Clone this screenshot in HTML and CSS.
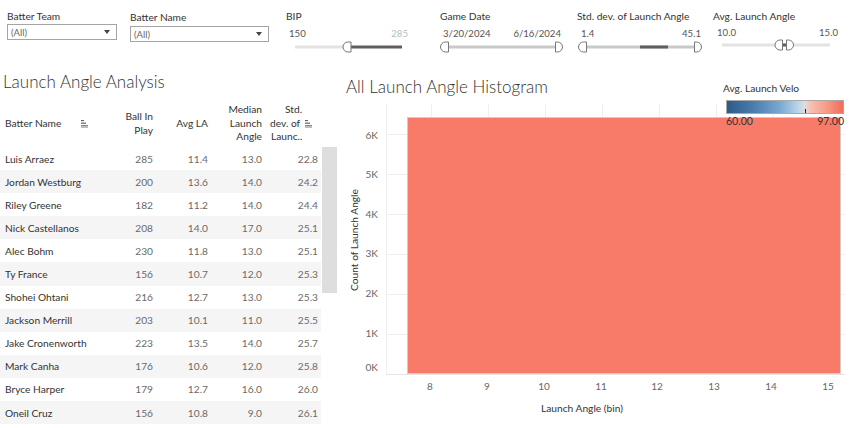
FILE: index.html
```html
<!DOCTYPE html>
<html>
<head>
<meta charset="utf-8">
<title>Launch Angle Analysis</title>
<link rel="stylesheet" href="styles.css">
</head>
<body>
<div class="page">
  <header class="filters">
    <div class="filter f-team">
      <div class="flabel">Batter Team</div>
      <div class="select"><span>(All)</span><span class="caret"></span></div>
    </div>
    <div class="filter f-name">
      <div class="flabel">Batter Name</div>
      <div class="select"><span>(All)</span><span class="caret"></span></div>
    </div>
    <div class="filter f-bip">
      <div class="flabel">BIP</div>
      <div class="vals"><span>150</span><span class="dim">285</span></div>
      <svg class="slider" width="124" height="12" viewBox="0 0 124 12">
        <rect x="9" y="4.5" width="52" height="3" fill="#e3e3e3"/>
        <rect x="64" y="4.5" width="52" height="3" fill="#5f5f5f"/>
        <path d="M65,1 H62 A5,5 0 0 0 62,11 H65 Z" fill="#fff" stroke="#777"/>
      </svg>
    </div>
    <div class="filter f-date">
      <div class="flabel">Game Date</div>
      <div class="vals"><span>3/20/2024</span><span>6/16/2024</span></div>
      <svg class="slider" width="130" height="12" viewBox="0 0 130 12">
        <rect x="6" y="4.5" width="112" height="3" fill="#c9c9c9"/>
        <path d="M8.5,1 H5.5 A5,5 0 0 0 5.5,11 H8.5 Z" fill="#fff" stroke="#777"/>
        <path d="M115.5,1 H117.5 A5,5 0 0 1 117.5,11 H115.5 Z" fill="#fff" stroke="#777"/>
      </svg>
    </div>
    <div class="filter f-std">
      <div class="flabel">Std. dev. of Launch Angle</div>
      <div class="vals"><span>1.4</span><span>45.1</span></div>
      <svg class="slider" width="130" height="12" viewBox="0 0 130 12">
        <rect x="8" y="4.5" width="111" height="3" fill="#c9c9c9"/>
        <rect x="63" y="4.5" width="28" height="3" fill="#5f5f5f"/>
        <path d="M9.5,1 H6.5 A5,5 0 0 0 6.5,11 H9.5 Z" fill="#fff" stroke="#777"/>
        <path d="M117.5,1 H119.5 A5,5 0 0 1 119.5,11 H117.5 Z" fill="#fff" stroke="#777"/>
      </svg>
    </div>
    <div class="filter f-avg">
      <div class="flabel">Avg. Launch Angle</div>
      <div class="vals"><span>10.0</span><span>15.0</span></div>
      <svg class="slider slider-avg" width="130" height="12" viewBox="0 0 130 12">
        <rect x="9" y="4.5" width="108" height="3" fill="#e3e3e3"/>
        <rect x="69" y="4.5" width="4" height="3" fill="#5f5f5f"/>
        <path d="M69.5,1 H67 A5,5 0 0 0 67,11 H69.5 Z" fill="#fff" stroke="#777"/>
        <path d="M73.5,1 H75.5 A5,5 0 0 1 75.5,11 H73.5 Z" fill="#fff" stroke="#777"/>
      </svg>
    </div>
  </header>

  <main class="main">
    <section class="left">
      <h1 class="title">Launch Angle Analysis</h1>
      <div class="table">
        <div class="thead">
          <div class="th th-name"><span>Batter Name</span>
            <svg class="sort" width="7" height="8" viewBox="0 0 7 8"><rect x="0" y="0" width="3" height="1.2" fill="#666"/><rect x="0" y="2.6" width="5" height="1.2" fill="#666"/><rect x="0" y="5.2" width="7" height="1.2" fill="#666"/><rect x="0" y="7" width="7" height="1" fill="#bbb"/></svg>
          </div>
          <div class="th num">Ball In<br>Play</div>
          <div class="th num">Avg LA</div>
          <div class="th num">Median<br>Launch<br>Angle</div>
          <div class="th th-std">
            <div class="l1">Std.</div>
            <div class="l2"><span>dev. of</span>
              <svg class="sort" width="7" height="8" viewBox="0 0 7 8"><rect x="0" y="0" width="3" height="1.2" fill="#666"/><rect x="0" y="2.6" width="5" height="1.2" fill="#666"/><rect x="0" y="5.2" width="7" height="1.2" fill="#666"/><rect x="0" y="7" width="7" height="1" fill="#bbb"/></svg>
            </div>
            <div class="l3">Launc..</div>
          </div>
        </div>
        <div class="tbody-wrap">
          <div class="tbody">
            <div class="row"><div class="name">Luis Arraez</div><div class="num">285</div><div class="num">11.4</div><div class="num">13.0</div><div class="num">22.8</div></div>
            <div class="row"><div class="name">Jordan Westburg</div><div class="num">200</div><div class="num">13.6</div><div class="num">14.0</div><div class="num">24.2</div></div>
            <div class="row"><div class="name">Riley Greene</div><div class="num">182</div><div class="num">11.2</div><div class="num">14.0</div><div class="num">24.4</div></div>
            <div class="row"><div class="name">Nick Castellanos</div><div class="num">208</div><div class="num">14.0</div><div class="num">17.0</div><div class="num">25.1</div></div>
            <div class="row"><div class="name">Alec Bohm</div><div class="num">230</div><div class="num">11.8</div><div class="num">13.0</div><div class="num">25.1</div></div>
            <div class="row"><div class="name">Ty France</div><div class="num">156</div><div class="num">10.7</div><div class="num">12.0</div><div class="num">25.3</div></div>
            <div class="row"><div class="name">Shohei Ohtani</div><div class="num">216</div><div class="num">12.7</div><div class="num">13.0</div><div class="num">25.3</div></div>
            <div class="row"><div class="name">Jackson Merrill</div><div class="num">203</div><div class="num">10.1</div><div class="num">11.0</div><div class="num">25.5</div></div>
            <div class="row"><div class="name">Jake Cronenworth</div><div class="num">223</div><div class="num">13.5</div><div class="num">14.0</div><div class="num">25.7</div></div>
            <div class="row"><div class="name">Mark Canha</div><div class="num">176</div><div class="num">10.6</div><div class="num">12.0</div><div class="num">25.8</div></div>
            <div class="row"><div class="name">Bryce Harper</div><div class="num">179</div><div class="num">12.7</div><div class="num">16.0</div><div class="num">26.0</div></div>
            <div class="row"><div class="name">Oneil Cruz</div><div class="num">156</div><div class="num">10.8</div><div class="num">9.0</div><div class="num">26.1</div></div>
          </div>
          <div class="scroll"><div class="thumb"></div></div>
        </div>
      </div>
    </section>

    <section class="right">
      <h2 class="htitle">All Launch Angle Histogram</h2>
      <div class="legend">
        <div class="ltitle">Avg. Launch Velo</div>
        <div class="lbar"></div>
        <div class="llabels"><span>60.00</span><span>97.00</span></div>
      </div>
      <svg class="chart" width="515" height="330" viewBox="340 98 515 330">
        <g stroke="#efefef" stroke-width="1">
          <line x1="386.5" y1="104" x2="386.5" y2="374"/>
          <line x1="431.5" y1="104" x2="431.5" y2="374"/>
          <line x1="488.5" y1="104" x2="488.5" y2="374"/>
          <line x1="545.5" y1="104" x2="545.5" y2="374"/>
          <line x1="602.5" y1="104" x2="602.5" y2="374"/>
          <line x1="659.5" y1="104" x2="659.5" y2="374"/>
          <line x1="716.5" y1="104" x2="716.5" y2="374"/>
          <line x1="773.5" y1="104" x2="773.5" y2="374"/>
          <line x1="830.5" y1="104" x2="830.5" y2="374"/>
          <line x1="386" y1="134.5" x2="845" y2="134.5"/>
          <line x1="386" y1="174.5" x2="845" y2="174.5"/>
          <line x1="386" y1="214.5" x2="845" y2="214.5"/>
          <line x1="386" y1="254.5" x2="845" y2="254.5"/>
          <line x1="386" y1="294.5" x2="845" y2="294.5"/>
          <line x1="386" y1="334.5" x2="845" y2="334.5"/>
        </g>
        <line x1="386" y1="374.5" x2="845" y2="374.5" stroke="#e4e4e4"/>
        <rect x="407.5" y="117.5" width="433" height="256" fill="#f77b68" stroke="#d9c9c6"/>
        <g class="ytick" text-anchor="end">
          <text x="378" y="136">6K</text>
          <text x="378" y="175">5K</text>
          <text x="378" y="215">4K</text>
          <text x="378" y="254">3K</text>
          <text x="378" y="294">2K</text>
          <text x="378" y="334">1K</text>
          <text x="378" y="368">0K</text>
        </g>
        <g class="xtick" text-anchor="middle">
          <text x="430" y="387">8</text>
          <text x="487" y="387">9</text>
          <text x="544" y="387">10</text>
          <text x="601" y="387">11</text>
          <text x="657" y="387">12</text>
          <text x="714" y="387">13</text>
          <text x="771" y="387">14</text>
          <text x="828" y="387">15</text>
        </g>
        <text class="atitle" x="582" y="409" text-anchor="middle">Launch Angle (bin)</text>
        <text class="atitle" x="0" y="0" text-anchor="middle" transform="translate(355 240) rotate(-90)">Count of Launch Angle</text>
      </svg>
    </section>
  </main>
</div>
</body>
</html>
```

FILE: styles.css
```css
* { box-sizing: border-box; }

body {
  margin: 0;
  font-family: Lato, "Liberation Sans", sans-serif;
  color: #333;
  background: #fff;
}

.page {
  width: 855px;
  height: 428px;
  overflow: hidden;
  position: relative;
  background: #fff;
}

/* ---------- filters ---------- */
.filters {
  display: flex;
  height: 62px;
  padding-left: 7px;
}

.filter { padding-top: 9px; }

.f-team { width: 123px; }
.f-name { width: 156px; padding-top: 10px; }
.f-bip { width: 154px; }
.f-date { width: 137px; }
.f-std { width: 136px; }
.f-avg { width: 142px; }

.flabel {
  font-size: 10.2px;
  line-height: 14px;
  height: 14px;
  color: #333;
  white-space: nowrap;
}

.select {
  margin-top: 1px;
  height: 16px;
  border: 1px solid #a5a5a5;
  display: flex;
  align-items: center;
  justify-content: space-between;
  padding: 0 6px 0 3px;
  font-size: 9.5px;
  color: #666;
}

.f-team .select { width: 110px; }
.f-name .select { width: 139px; margin-top: 2px; }

.caret {
  width: 0;
  height: 0;
  border-left: 3px solid transparent;
  border-right: 3px solid transparent;
  border-top: 4px solid #444;
}

.vals {
  display: flex;
  justify-content: space-between;
  font-size: 9.6px;
  line-height: 14px;
  margin-top: 4px;
  color: #555;
}

.f-bip .vals { width: 122px; padding-left: 3px; }
.f-date .vals { width: 121px; padding-left: 3px; }
.f-std .vals { width: 124px; padding-left: 4px; }
.f-avg .vals { width: 125px; padding-left: 4px; margin-top: 3px; }

.vals .dim { color: #bbb; }

.slider { display: block; }
.slider-avg { margin-top: -1px; }

/* ---------- main ---------- */
.main {
  display: flex;
  height: 366px;
}

.left {
  width: 340px;
  padding-top: 9px;
}

.title {
  margin: 0;
  padding-left: 3px;
  font-size: 17px;
  line-height: 22px;
  font-weight: 300;
  color: #333;
  white-space: nowrap;
}

.table { margin-top: 7px; }

.thead,
.row {
  display: grid;
  grid-template-columns: 90px 58px 55px 54px 56px;
  padding-left: 5px;
  width: 321px;
}

.thead {
  height: 47px;
  align-items: center;
  font-size: 10.2px;
  line-height: 13.5px;
  color: #333;
}

.th.num { text-align: right; }

.th-name {
  display: flex;
  align-items: center;
  white-space: nowrap;
}

.th-name .sort { margin-left: 20px; }

.th-std { white-space: nowrap; }

.th-std .l1 { padding-left: 23px; }
.th-std .l2 {
  display: flex;
  align-items: center;
  padding-left: 8px;
}
.th-std .l2 .sort { margin-left: 5px; }
.th-std .l3 { padding-left: 9px; }

.tbody-wrap { display: flex; }

.tbody { width: 321px; }

.row {
  height: 23.1px;
  align-items: center;
  font-size: 10.2px;
}

.row:nth-child(even) { background: #f5f5f5; }

.row .name { color: #333; white-space: nowrap; }
.row .num { color: #6a6a6a; text-align: right; }

.scroll {
  width: 15px;
  margin-left: 1px;
}

.thumb {
  height: 146px;
  background: #dedede;
}

/* ---------- right ---------- */
.right {
  flex: 1;
  position: relative;
  padding-top: 14px;
}

.htitle {
  margin: 0;
  padding-left: 6px;
  font-size: 17px;
  line-height: 22px;
  font-weight: 300;
  color: #333;
  white-space: nowrap;
}

.chart { display: block; }

.chart text {
  font-family: Lato, "Liberation Sans", sans-serif;
  dominant-baseline: middle;
}

.ytick text,
.xtick text {
  font-size: 10px;
  fill: #666;
}

.atitle {
  font-size: 10.2px;
  fill: #333;
}

.legend {
  position: absolute;
  left: 383px;
  top: 20px;
  width: 124px;
}

.ltitle {
  font-size: 10.2px;
  line-height: 12px;
  color: #333;
  white-space: nowrap;
}

.lbar {
  position: relative;
  margin-top: 6px;
  margin-left: 3px;
  width: 118px;
  height: 14px;
  border: 1px solid #a8a8a8;
  background: linear-gradient(to right, #2b5b8a 0%, #4a7bab 22%, #77a6d0 45%, #b3d2e9 60%, #dedede 67%, #f7c0b3 72%, #f6a08e 84%, #f26c58 100%);
}

.lbar::after {
  content: "";
  position: absolute;
  left: 78px;
  bottom: 0;
  width: 1px;
  height: 4px;
  background: #222;
}

.llabels {
  display: flex;
  justify-content: space-between;
  width: 118px;
  margin-left: 3px;
  margin-top: 1px;
  font-size: 10.5px;
  line-height: 12px;
  color: #333;
}
```
